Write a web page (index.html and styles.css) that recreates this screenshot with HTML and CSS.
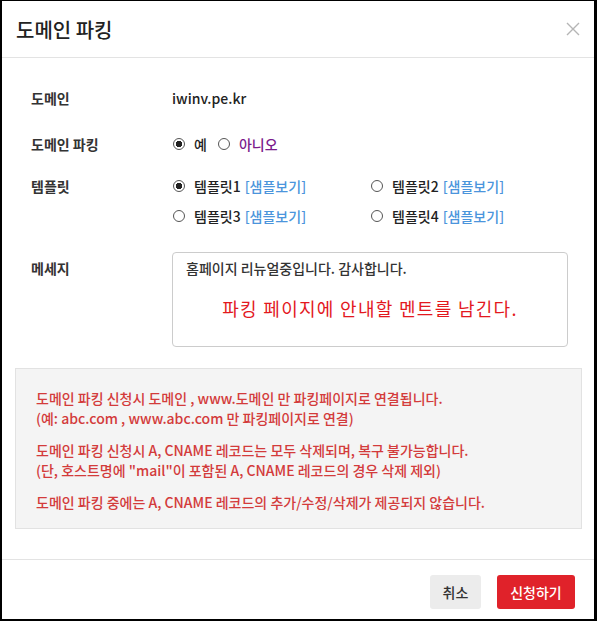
FILE: index.html
```html
<!DOCTYPE html>
<html>
<head>
<meta charset="utf-8">
<link rel="stylesheet" href="styles.css">
</head>
<body>

<div class="modal">
  <div class="modal-header">
    <h2>도메인 파킹</h2>
    <button type="button" class="close-btn" aria-label="닫기">
      <svg width="14" height="14" viewBox="0 0 14 14"><path d="M1 1L13 13M13 1L1 13" stroke="#b5b5b5" stroke-width="1.4" fill="none"/></svg>
    </button>
  </div>

  <form class="modal-body" id="parkingForm">
    <div class="row row-domain">
      <div class="label">도메인</div>
      <div class="field">iwinv.pe.kr</div>
    </div>

    <div class="row row-parking">
      <div class="label">도메인 파킹</div>
      <div class="field options">
        <label class="opt"><input type="radio" name="parking" value="Y" checked> 예</label>
        <label class="opt opt-no"><input type="radio" name="parking" value="N"> 아니오</label>
      </div>
    </div>

    <div class="row row-template">
      <div class="label">템플릿</div>
      <div class="field templates">
        <label class="opt"><input type="radio" name="tpl" value="1" checked> 템플릿1 <a href="#" class="sample">[샘플보기]</a></label>
        <label class="opt"><input type="radio" name="tpl" value="2"> 템플릿2 <a href="#" class="sample">[샘플보기]</a></label>
        <label class="opt"><input type="radio" name="tpl" value="3"> 템플릿3 <a href="#" class="sample">[샘플보기]</a></label>
        <label class="opt"><input type="radio" name="tpl" value="4"> 템플릿4 <a href="#" class="sample">[샘플보기]</a></label>
      </div>
    </div>

    <div class="row row-message">
      <div class="label">메세지</div>
      <div class="field">
        <div class="message-box">
          <div class="message-text">홈페이지 리뉴얼중입니다. 감사합니다.</div>
          <div class="message-hint">파킹 페이지에 안내할 멘트를 남긴다.</div>
        </div>
      </div>
    </div>

    <div class="notice">
      <p>도메인 파킹 신청시 도메인 , www.도메인 만 파킹페이지로 연결됩니다.<br>(예: abc.com , www.abc.com 만 파킹페이지로 연결)</p>
      <p>도메인 파킹 신청시 A, CNAME 레코드는 모두 삭제되며, 복구 불가능합니다.<br>(단, 호스트명에 "mail"이 포함된 A, CNAME 레코드의 경우 삭제 제외)</p>
      <p>도메인 파킹 중에는 A, CNAME 레코드의 추가/수정/삭제가 제공되지 않습니다.</p>
    </div>
  </form>

  <div class="modal-footer">
    <button type="button" class="btn btn-cancel">취소</button>
    <button type="submit" class="btn btn-submit" form="parkingForm">신청하기</button>
  </div>
</div>

</body>
</html>
```

FILE: styles.css
```css
* {
  box-sizing: border-box;
}

body {
  margin: 0;
  font-family: "Noto Sans CJK KR", "Noto Sans", sans-serif;
  color: #222;
  background-color: #fff;
}

.modal {
  width: 597px;
  height: 621px;
  border: 2px solid #000;
  border-right-width: 3px;
  border-top-width: 1px;
  display: flex;
  flex-direction: column;
}

.modal-header {
  height: 57px;
  border-bottom: 1px solid #e3e3e3;
  display: flex;
  align-items: center;
  justify-content: space-between;
  padding: 0 14px 0 14px;
}

.modal-header h2 {
  margin: 0;
  font-size: 20px;
  font-weight: 500;
  color: #222;
}

.close-btn {
  border: none;
  background: none;
  padding: 0;
  width: 14px;
  height: 14px;
  cursor: pointer;
}

.modal-body {
  flex: 1;
  padding: 30px 0 0 0;
  font-size: 14px;
  font-weight: 500;
}

.row {
  display: flex;
  line-height: 20px;
  padding-left: 29px;
}

.label {
  width: 141px;
  font-weight: bold;
  color: #333;
}

.field {
  flex: 1;
  color: #222;
}

.row-domain {
  margin-bottom: 26px;
}

.row-parking {
  margin-bottom: 22px;
}

.row-template {
  margin-bottom: 26px;
}

.options {
  display: flex;
  gap: 10px;
}

.opt {
  display: flex;
  align-items: center;
  gap: 4px;
  white-space: nowrap;
}

.opt-no {
  color: #7b1a8c;
}

.templates {
  display: grid;
  grid-template-columns: 198px 1fr;
  row-gap: 10px;
}

input[type="radio"] {
  appearance: none;
  width: 12px;
  height: 12px;
  margin: 0 5px 0 1px;
  border: 1px solid #555;
  border-radius: 50%;
  background: #fff;
}

input[type="radio"]:checked {
  background: radial-gradient(circle, #222 0, #222 3px, #fff 3.5px);
}

.sample {
  color: #4b95dc;
  text-decoration: none;
}

.row-message .label {
  padding-top: 6px;
}

.message-box {
  width: 396px;
  height: 95px;
  border: 1px solid #ccc;
  border-radius: 4px;
  padding: 5px 13px;
}

.message-text {
  line-height: 20px;
  color: #333;
}

.message-hint {
  margin-top: 20px;
  text-align: center;
  color: #e3181e;
  font-size: 18px;
  font-weight: 400;
  letter-spacing: 1.3px;
}

.notice {
  margin: 21px 12px 0 13px;
  background-color: #f4f4f4;
  border: 1px solid #e2e2e2;
  padding: 19px 20px 16px 20px;
  color: #d33b3b;
  line-height: 20px;
}

.notice p {
  margin: 0 0 12px 0;
}

.notice p:last-child {
  margin-bottom: 0;
}

.modal-footer {
  border-top: 1px solid #e3e3e3;
  display: flex;
  justify-content: flex-end;
  gap: 16px;
  padding: 15px 19px 10px 0;
}

.btn {
  height: 34px;
  border: none;
  border-radius: 3px;
  font-family: inherit;
  font-size: 14px;
  font-weight: 500;
  cursor: pointer;
}

.btn-cancel {
  width: 51px;
  background-color: #ececec;
  color: #333;
}

.btn-submit {
  width: 78px;
  background-color: #e0222a;
  color: #fff;
}
```
